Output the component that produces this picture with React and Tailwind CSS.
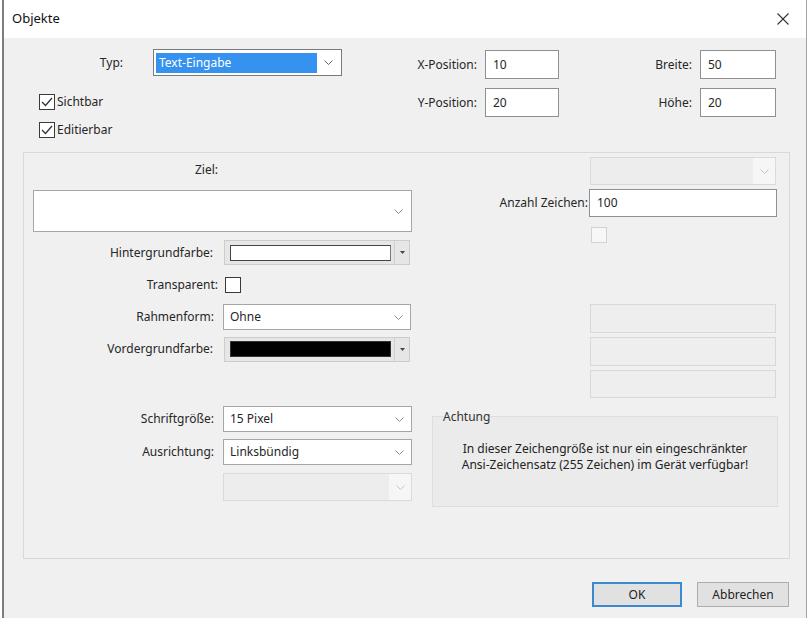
import React from "react";

function Chevron({ color = "#8c8c8c" }) {
  return (
    <svg width="9" height="5" viewBox="0 0 9 5" className="shrink-0">
      <polyline points="0.5,0.5 4.5,4.5 8.5,0.5" fill="none" stroke={color} strokeWidth="1" />
    </svg>
  );
}

function Check({ checked, disabled }) {
  return (
    <div
      className={
        disabled
          ? "w-[16px] h-[16px] border border-[#d2d2d2] bg-[#f7f7f7] shrink-0"
          : "w-[16px] h-[16px] border border-[#3a3a3a] bg-white shrink-0 flex items-center justify-center"
      }
    >
      {checked && (
        <svg width="14" height="14" viewBox="0 0 14 14">
          <polyline points="2,7 5.5,10.5 12,3" fill="none" stroke="#333" strokeWidth="1.3" />
        </svg>
      )}
    </div>
  );
}

function ColorPick({ color }) {
  return (
    <div className="flex items-center w-[186px] h-[25px] border border-[#cccccc] bg-[#e6e6e6] pl-[5px] ml-[11px]">
      <div className={color === "black" ? "w-[161px] h-[16px] border border-[#333] bg-black" : "w-[161px] h-[16px] border border-[#444] border-r-[#777] bg-white"} />
      <div className="ml-[3px] h-full border-l border-[#d0d0d0] flex-1 flex items-center justify-center">
        <svg width="5" height="3" viewBox="0 0 5 3">
          <polygon points="0,0 5,0 2.5,3" fill="#444" />
        </svg>
      </div>
    </div>
  );
}

function Combo({ className, value }) {
  return (
    <div className={"flex items-center justify-between border border-[#a6a6a6] bg-white pl-[6px] pr-[7px] " + className}>
      <span>{value}</span>
      <Chevron />
    </div>
  );
}

function DisabledCombo({ className }) {
  return (
    <div className={"flex border border-[#dadada] bg-[#ededed] " + className}>
      <div className="flex-1" />
      <div className="w-[22px] h-full bg-[#f6f6f6] flex items-center justify-center">
        <Chevron color="#c4c4c4" />
      </div>
    </div>
  );
}

function Input({ className, value }) {
  return (
    <div className={"flex items-center border border-[#8f8f8f] bg-white pl-[7px] " + className}>
      {value}
    </div>
  );
}

export default function App() {
  return (
    <div className="w-[809px] h-[626px] bg-white font-['Noto_Sans',sans-serif] text-[12px] text-[#262626] overflow-hidden">
      <div className="ml-[2px] w-[805px] h-[618px] border-l-2 border-l-[#7d7d7d] border-r border-r-[#a3a3a3] flex flex-col">
        {/* title bar */}
        <div className="h-[38px] shrink-0 bg-white flex items-center justify-between pl-[8px] pr-[17px]">
          <span className="text-[13px] text-[#111]">Objekte</span>
          <svg width="12" height="12" viewBox="0 0 12 12">
            <line x1="0.5" y1="0.5" x2="11.5" y2="11.5" stroke="#333" strokeWidth="1.1" />
            <line x1="11.5" y1="0.5" x2="0.5" y2="11.5" stroke="#333" strokeWidth="1.1" />
          </svg>
        </div>

        {/* body */}
        <div className="flex-1 bg-[#f0f0f0] flex flex-col">
          {/* top section */}
          <div className="h-[114px] shrink-0 flex">
            <div className="w-[338px]">
              <div className="mt-[11px] flex items-center h-[27px]">
                <div className="w-[119px] text-right">Typ:</div>
                <div className="ml-[30px] w-[189px] h-[27px] border border-[#7a7a7a] bg-white flex items-center pl-[2px] pr-[8px]">
                  <div className="w-[161px] h-[20px] bg-[#3592ee] text-white flex items-center pl-[3px]">Text-Eingabe</div>
                  <div className="flex-1" />
                  <Chevron color="#666" />
                </div>
              </div>
              <div className="mt-[18px] ml-[35px] flex items-center h-[16px]">
                <Check checked />
                <span className="ml-[2px]">Sichtbar</span>
              </div>
              <div className="mt-[12px] ml-[35px] flex items-center h-[16px]">
                <Check checked />
                <span className="ml-[2px]">Editierbar</span>
              </div>
            </div>
            <div className="pt-[12px]">
              <div className="flex items-center h-[29px]">
                <div className="w-[135px] text-right">X-Position:</div>
                <Input className="ml-[8px] w-[74px] h-[29px]" value="10" />
              </div>
              <div className="mt-[9px] flex items-center h-[29px]">
                <div className="w-[135px] text-right">Y-Position:</div>
                <Input className="ml-[8px] w-[74px] h-[29px]" value="20" />
              </div>
            </div>
            <div className="pt-[12px]">
              <div className="flex items-center h-[29px]">
                <div className="w-[133px] text-right">Breite:</div>
                <Input className="ml-[8px] w-[76px] h-[29px]" value="50" />
              </div>
              <div className="mt-[9px] flex items-center h-[29px]">
                <div className="w-[133px] text-right">Höhe:</div>
                <Input className="ml-[8px] w-[76px] h-[29px]" value="20" />
              </div>
            </div>
          </div>

          {/* group box */}
          <div className="ml-[19px] w-[767px] h-[407px] shrink-0 border border-[#d9d9d9] flex">
            {/* left column */}
            <div className="w-[391px]">
              <div className="mt-[8px] h-[18px] flex items-center">
                <div className="w-[194px] text-right">Ziel:</div>
              </div>
              <Combo className="mt-[11px] ml-[9px] w-[379px] h-[42px] pr-[8px]" value="" />
              <div className="mt-[8px] h-[25px] flex items-center">
                <div className="w-[189px] text-right">Hintergrundfarbe:</div>
                <ColorPick color="white" />
              </div>
              <div className="mt-[12px] h-[16px] flex items-center">
                <div className="w-[194px] text-right">Transparent:</div>
                <div className="ml-[7px]">
                  <div className="w-[16px] h-[16px] border border-[#3a3a3a] bg-white" />
                </div>
              </div>
              <div className="mt-[11px] h-[26px] flex items-center">
                <div className="w-[190px] text-right">Rahmenform:</div>
                <Combo className="ml-[9px] w-[188px] h-[26px]" value="Ohne" />
              </div>
              <div className="mt-[7px] h-[24px] flex items-center">
                <div className="w-[189px] text-right">Vordergrundfarbe:</div>
                <ColorPick color="black" />
              </div>
              <div className="mt-[45px] h-[26px] flex items-center">
                <div className="w-[190px] text-right">Schriftgröße:</div>
                <Combo className="ml-[9px] w-[189px] h-[26px] border-[#8a8a8a]" value="15 Pixel" />
              </div>
              <div className="mt-[7px] h-[26px] flex items-center">
                <div className="w-[190px] text-right">Ausrichtung:</div>
                <Combo className="ml-[9px] w-[189px] h-[26px] border-[#8a8a8a]" value="Linksbündig" />
              </div>
              <DisabledCombo className="mt-[8px] ml-[199px] w-[189px] h-[28px]" />
            </div>

            {/* right column */}
            <div className="flex-1">
              <DisabledCombo className="mt-[4px] ml-[175px] w-[186px] h-[28px]" />
              <div className="mt-[4px] h-[28px] flex items-center">
                <div className="w-[173px] text-right">Anzahl Zeichen:</div>
                <Input className="ml-[1px] w-[188px] h-[28px] border-[#7a7a7a]" value="100" />
              </div>
              <div className="mt-[10px] ml-[176px]">
                <Check disabled />
              </div>
              <div className="mt-[61px] ml-[175px] w-[186px] h-[29px] border border-[#d8d8d8] bg-[#eeeeee]" />
              <div className="mt-[4px] ml-[175px] w-[186px] h-[29px] border border-[#d8d8d8] bg-[#eeeeee]" />
              <div className="mt-[4px] ml-[175px] w-[186px] h-[28px] border border-[#d8d8d8] bg-[#eeeeee]" />
              <fieldset className="mt-[10px] ml-[17px] w-[346px] h-[99px] border border-[#dedede] bg-[#ebebeb] px-[10px]">
                <legend className="px-0 leading-[17px] text-[#333]">Achtung</legend>
                <p className="mt-[16px] leading-[16px] text-center text-[#222]">
                  In dieser Zeichengröße ist nur ein eingeschränkter
                  <br />
                  Ansi-Zeichensatz (255 Zeichen) im Gerät verfügbar!
                </p>
              </fieldset>
            </div>
          </div>

          {/* buttons */}
          <div className="mt-[23px] flex justify-end pr-[17px] gap-[15px]">
            <button className="w-[90px] h-[25px] border-2 border-[#3b8ad0] bg-[#e1e1e1] text-[#222]">OK</button>
            <button className="w-[92px] h-[25px] border border-[#adadad] bg-[#e1e1e1] text-[#222]">Abbrechen</button>
          </div>
        </div>
      </div>
    </div>
  );
}
